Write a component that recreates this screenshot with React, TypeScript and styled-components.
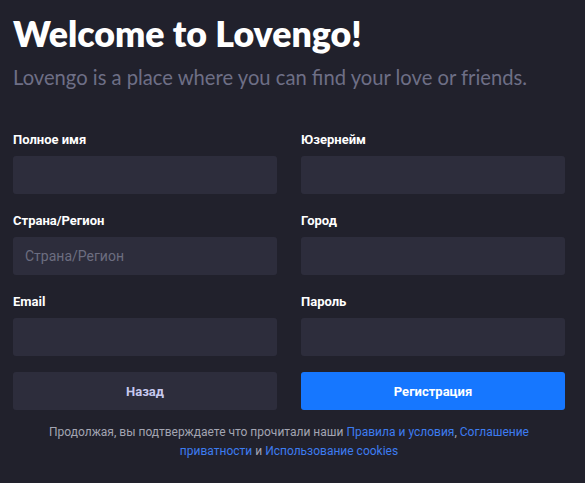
import React from "react";
import styled, { createGlobalStyle } from "styled-components";

const Global = createGlobalStyle`
  html, body { margin: 0; padding: 0; background: #21212c; }
  body { font-family: "Roboto", "Noto Sans", sans-serif; }
  * { box-sizing: border-box; }
`;

const Page = styled.div`
  padding: 10px 20px 0 13px;
  min-height: 483px;
  background: #21212c;
`;

const Title = styled.h1`
  margin: 0;
  font-family: "Lato", sans-serif;
  font-weight: 800;
  font-size: 35.7px;
  line-height: 48px;
  color: #ffffff;
`;

const Subtitle = styled.p`
  margin: 5px 0 0;
  font-family: "Lato", sans-serif;
  font-size: 20.2px;
  line-height: 28px;
  color: #6e6f86;
`;

const Form = styled.form`
  margin-top: 40px;
  display: grid;
  grid-template-columns: 1fr 1fr;
  column-gap: 24px;
  row-gap: 18px;
`;

const Field = styled.label`
  display: flex;
  flex-direction: column;
  gap: 8px;
`;

const Label = styled.span`
  font-family: "Roboto", sans-serif;
  font-size: 13px;
  font-weight: 700;
  line-height: 17px;
  color: #ffffff;
`;

const Input = styled.input`
  height: 38px;
  border: none;
  border-radius: 3px;
  background: #2d2d3c;
  padding: 0 12px;
  font-family: "Roboto", sans-serif;
  font-size: 14px;
  color: #e6e6ee;
  outline: none;
  &::placeholder { color: #6c6d80; }
`;

const Button = styled.button<{ $primary?: boolean }>`
  height: 38px;
  margin-top: -2px;
  border: none;
  border-radius: 3px;
  background: ${(p) => (p.$primary ? "#1677ff" : "#2d2d3c")};
  color: ${(p) => (p.$primary ? "#ffffff" : "#c6c8ee")};
  font-family: "Roboto", sans-serif;
  font-size: 13px;
  font-weight: 700;
  cursor: pointer;
`;

const Note = styled.p`
  margin: 13px 0 0;
  padding: 0 27px;
  text-align: center;
  font-family: "Roboto", sans-serif;
  font-size: 12px;
  line-height: 19px;
  color: #a3a5b2;
`;

const Link = styled.a`
  color: #3d7cf0;
  text-decoration: none;
`;

export default function App() {
  return (
    <>
      <Global />
      <Page>
        <Title>Welcome to Lovengo!</Title>
        <Subtitle>Lovengo is a place where you can find your love or friends.</Subtitle>
        <Form onSubmit={(e) => e.preventDefault()}>
          <Field>
            <Label>Полное имя</Label>
            <Input />
          </Field>
          <Field>
            <Label>Юзернейм</Label>
            <Input />
          </Field>
          <Field>
            <Label>Страна/Регион</Label>
            <Input placeholder="Страна/Регион" />
          </Field>
          <Field>
            <Label>Город</Label>
            <Input />
          </Field>
          <Field>
            <Label>Email</Label>
            <Input type="email" />
          </Field>
          <Field>
            <Label>Пароль</Label>
            <Input type="password" />
          </Field>
          <Button type="button">Назад</Button>
          <Button type="submit" $primary>
            Регистрация
          </Button>
        </Form>
        <Note>
          Продолжая, вы подтверждаете что прочитали наши <Link href="#">Правила и условия</Link>,{" "}
          <Link href="#">Соглашение приватности</Link> и <Link href="#">Использование cookies</Link>
        </Note>
      </Page>
    </>
  );
}
